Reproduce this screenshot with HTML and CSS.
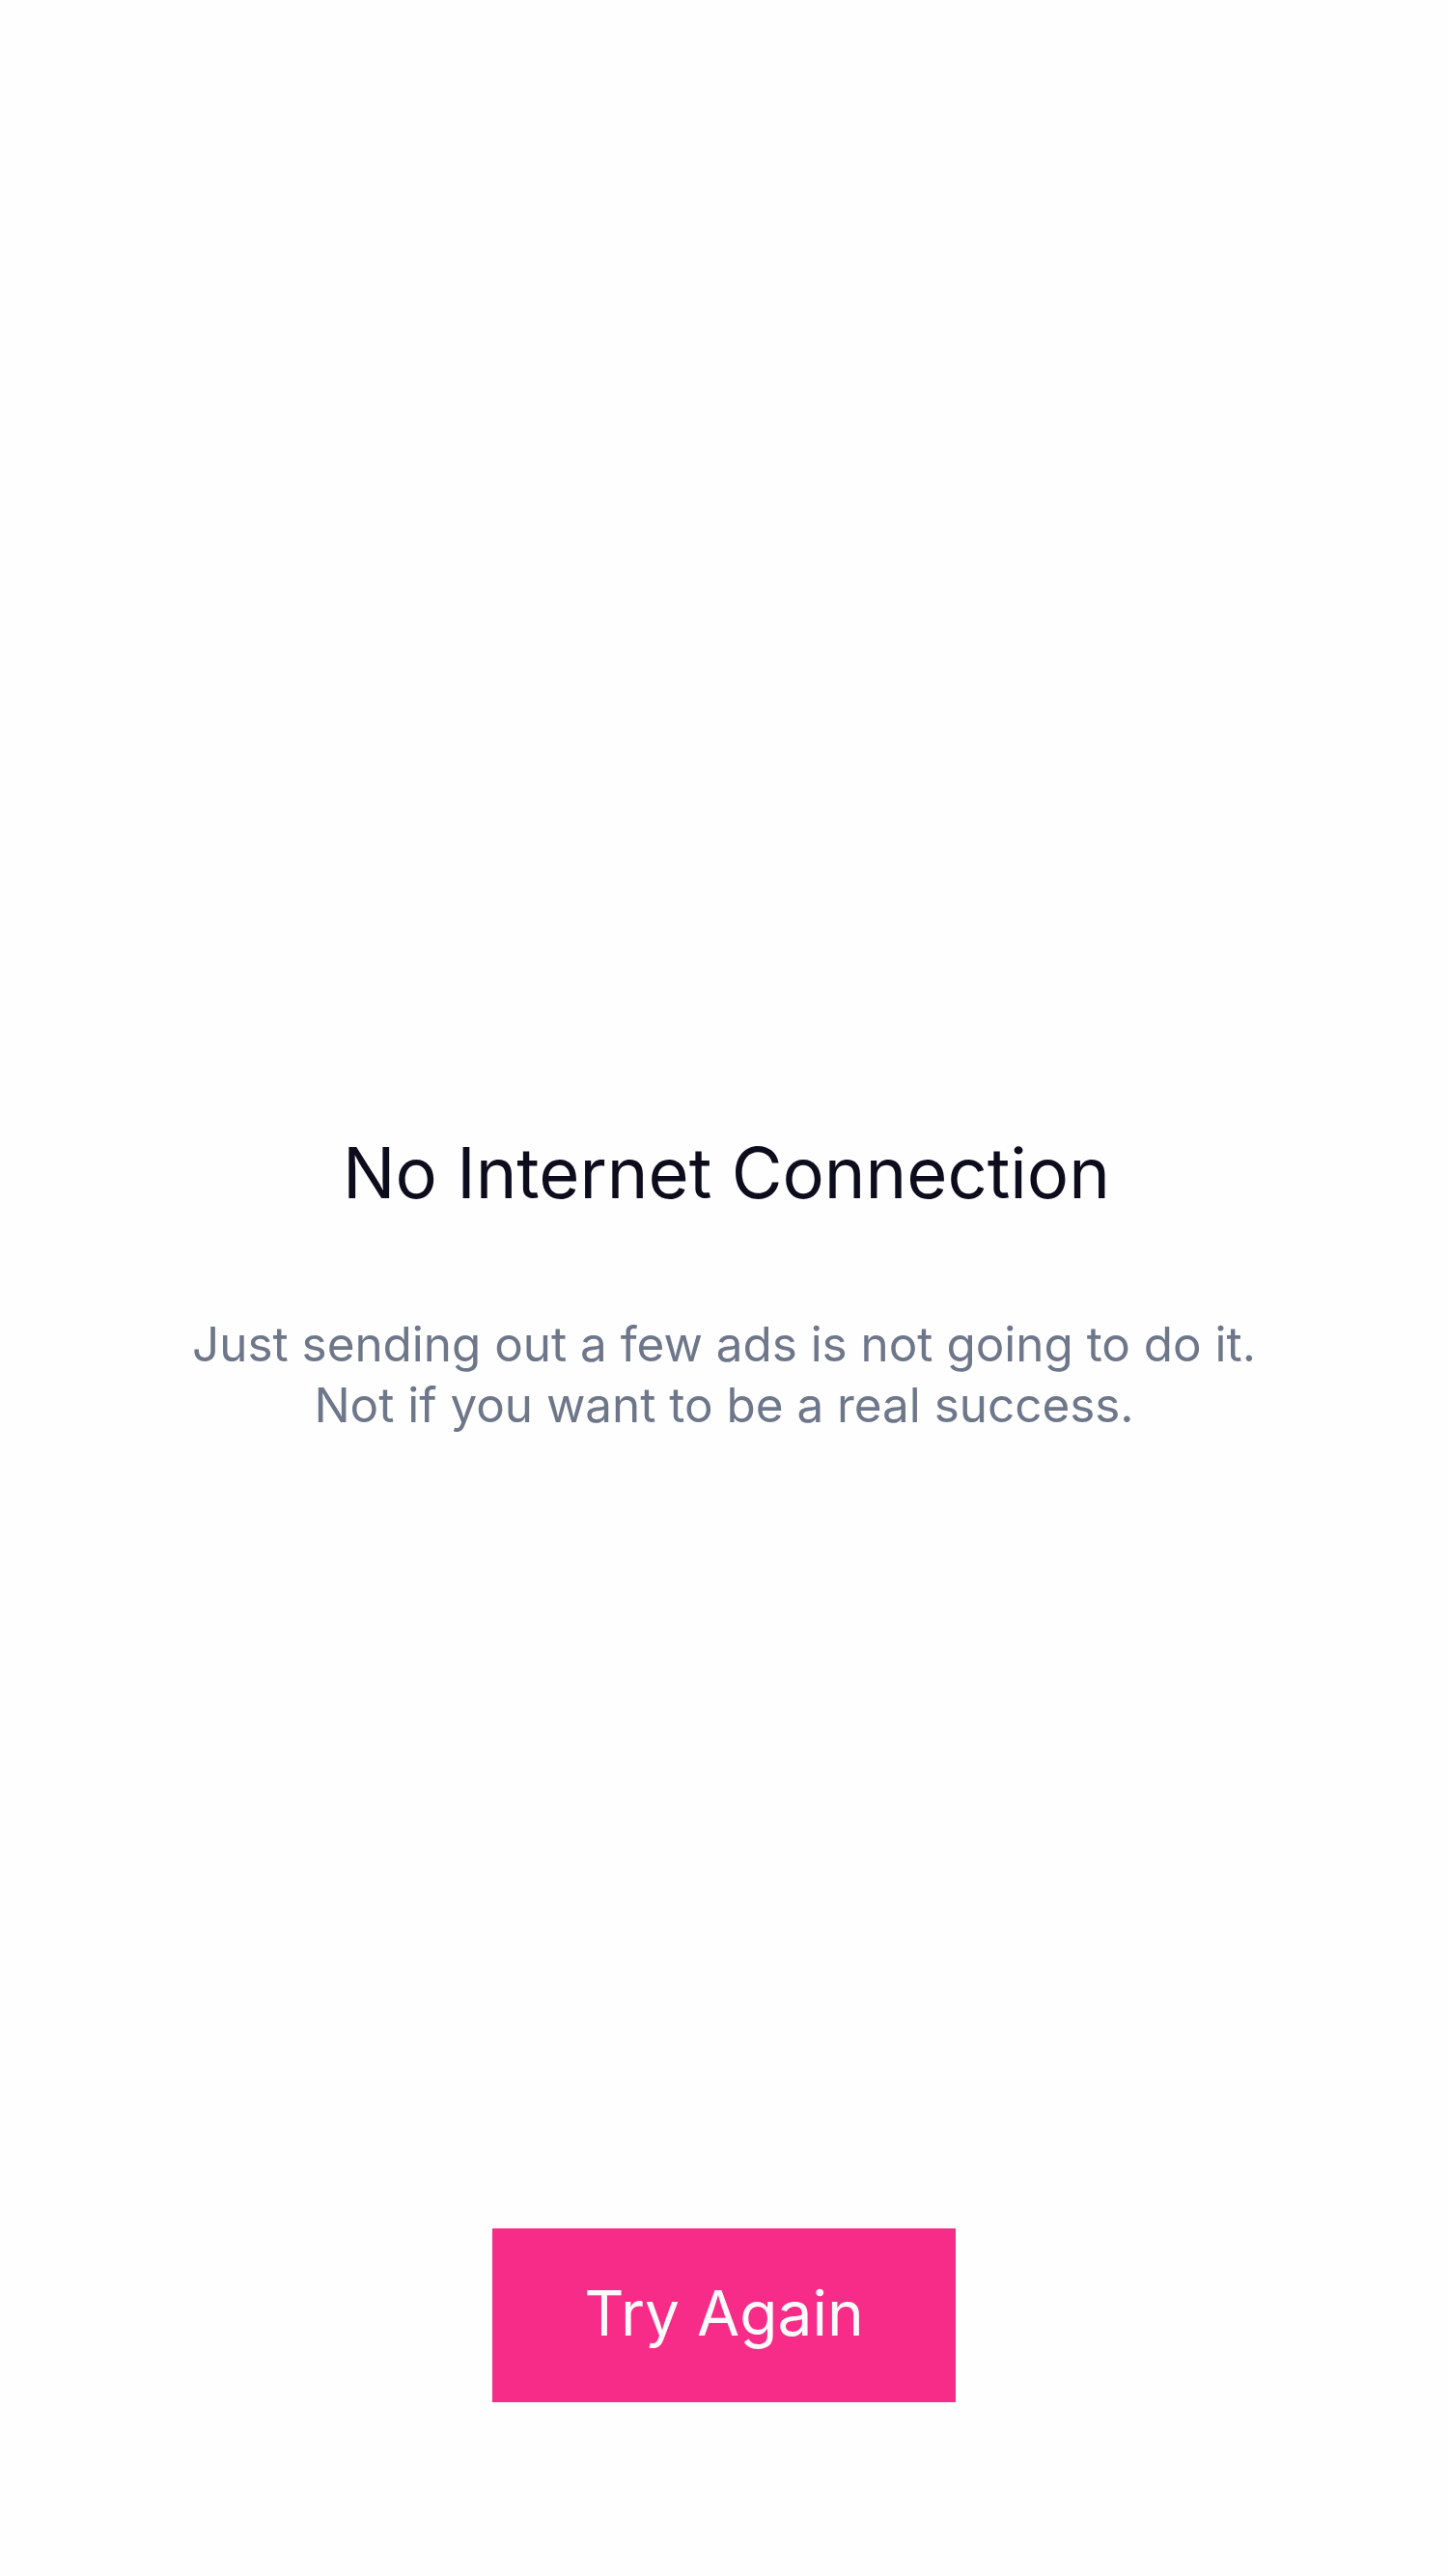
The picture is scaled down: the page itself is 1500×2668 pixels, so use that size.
FILE: index.html
```html
<!DOCTYPE html>
<html lang="en">
<head>
<meta charset="utf-8">
<title>No Internet Connection</title>
<link rel="stylesheet" href="styles.css">
</head>
<body>
<main class="screen">
  <section class="message">
    <h1 class="title">No Internet Connection</h1>
    <p class="subtitle">Just sending out a few ads is not going to do it.<br>Not if you want to be a real success.</p>
  </section>
  <div class="actions">
    <button class="btn-retry" type="button">Try Again</button>
  </div>
</main>
</body>
</html>
```

FILE: styles.css
```css
* { box-sizing: border-box; }
html, body { margin: 0; padding: 0; background: #fefefe; }
body { font-family: Inter, "Noto Sans", "Liberation Sans", sans-serif; }
.screen {
  height: 2668px;
  display: flex;
  flex-direction: column;
  align-items: center;
}
.message {
  margin-top: 1171px;
  display: flex;
  flex-direction: column;
  align-items: center;
  text-align: center;
}
.title {
  margin: 0;
  padding-left: 5px;
  font-size: 72.3px;
  line-height: 88px;
  font-weight: 400;
  color: #0d0c1c;
}
.subtitle {
  margin: 102px 0 0;
  font-size: 49.4px;
  line-height: 63px;
  color: #6e778a;
}
.actions {
  margin-top: auto;
  margin-bottom: 180px;
}
.btn-retry {
  width: 480px;
  height: 180px;
  border: 0;
  border-radius: 0;
  background: #f72c88;
  color: #fafafa;
  font-family: Inter, "Noto Sans", "Liberation Sans", sans-serif;
  font-size: 64px;
  font-weight: 400;
  padding: 0 0 6px;
  cursor: pointer;
}
```
